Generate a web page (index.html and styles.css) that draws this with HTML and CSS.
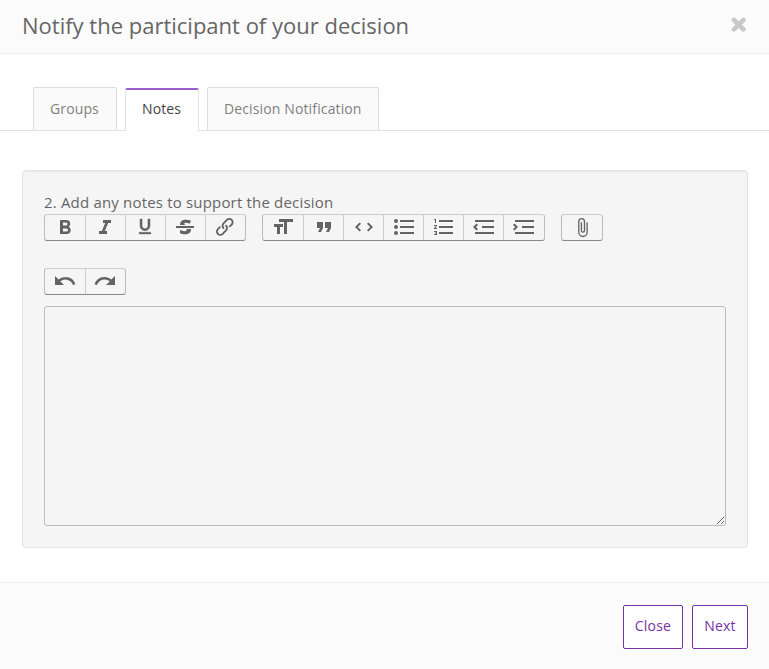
FILE: index.html
```
<!DOCTYPE html>
<html lang="en">
<head>
<meta charset="utf-8">
<title>Notify the participant of your decision</title>
<link rel="stylesheet" href="styles.css">
</head>
<body>
<header class="modal-header">
  <h1>Notify the participant of your decision</h1>
  <button class="dismiss" aria-label="Dismiss"><svg width="16" height="16" viewBox="0 0 16 16"><path d="M3 3l9.4 9.4M12.4 3L3 12.4" stroke="#c8c8c8" stroke-width="4.6" stroke-linecap="round"/></svg></button>
</header>
<main>
  <nav class="tabs">
    <a class="tab">Groups</a>
    <a class="tab active">Notes</a>
    <a class="tab">Decision Notification</a>
  </nav>
  <section class="well">
    <label>2. Add any notes to support the decision</label>
    <div class="toolbar">
      <div class="group">
        <button><svg viewBox="0 0 24 24"><path d="M15.6 11.8c1-.7 1.6-1.8 1.6-2.8a4 4 0 0 0-4-4H7v14h7c2.1 0 3.7-1.7 3.7-3.8 0-1.5-.8-2.8-2.1-3.4zM10 7.5h3a1.5 1.5 0 1 1 0 3h-3v-3zm3.5 9H10v-3h3.5a1.5 1.5 0 1 1 0 3z"/></svg></button>
        <button><svg viewBox="0 0 24 24"><path d="M10 5v3h2.2l-3.4 8H6v3h8v-3h-2.2l3.4-8H18V5h-8z"/></svg></button>
        <button><svg class="underline" viewBox="0 0 24 24"><path d="M12 17c3.31 0 6-2.69 6-6V3h-2.5v8c0 1.93-1.57 3.5-3.5 3.5S8.5 12.93 8.5 11V3H6v8c0 3.31 2.69 6 6 6zm-7 2v2h14v-2H5z"/></svg></button>
        <button><svg viewBox="0 0 24 24"><path d="M12.73 14l.28.14c.26.15.45.3.57.44.12.14.18.3.18.5 0 .3-.15.56-.44.75-.3.2-.76.3-1.39.3A13.52 13.52 0 0 1 7 14.95v3.37a10.64 10.64 0 0 0 4.84.88c1.26 0 2.35-.19 3.28-.56.93-.37 1.64-.9 2.14-1.57s.74-1.45.74-2.32c0-.26-.02-.51-.06-.75h-5.21zm-5.5-4c-.08-.34-.12-.7-.12-1.1 0-1.29.52-2.3 1.58-3.02 1.05-.72 2.5-1.08 4.34-1.08 1.62 0 3.28.34 4.97 1l-1.3 2.93c-1.47-.6-2.73-.9-3.8-.9-.55 0-.96.08-1.2.26-.26.17-.38.38-.38.64 0 .27.16.52.48.74.17.12.53.3 1.05.53H7.23zM3 13h18v-2H3v2z"/></svg></button>
        <button><svg viewBox="0 0 24 24"><path d="M9.88 13.7a4.3 4.3 0 0 1 0-6.07l3.37-3.37a4.26 4.26 0 0 1 6.07 0 4.3 4.3 0 0 1 0 6.06l-1.96 1.72a.91.91 0 1 1-1.3-1.3l1.97-1.71a2.46 2.46 0 0 0-3.48-3.48l-3.38 3.37a2.46 2.46 0 0 0 0 3.48.91.91 0 1 1-1.3 1.3z"/><path d="M4.25 19.46a4.3 4.3 0 0 1 0-6.07l1.93-1.9a.91.91 0 1 1 1.3 1.3l-1.93 1.9a2.46 2.46 0 0 0 3.48 3.48l3.37-3.38c.96-.96.96-2.52 0-3.48a.91.91 0 1 1 1.3-1.3 4.3 4.3 0 0 1 0 6.07l-3.38 3.38a4.26 4.26 0 0 1-6.07 0z"/></svg></button>
      </div>
      <div class="group blocks">
        <button><svg viewBox="0 0 24 24"><path d="M12 9v3H9v7H6v-7H3V9h9zM8 4h14v3h-6v12h-3V7H8V4z"/></svg></button>
        <button><svg viewBox="0 0 24 24"><path d="M6 17h3l2-4V7H5v6h3zm8 0h3l2-4V7h-6v6h3z"/></svg></button>
        <button><svg viewBox="0 0 24 24"><path d="M18.2 12L15 15.2l1.4 1.4L21 12l-4.6-4.6L15 8.8l3.2 3.2zM5.8 12L9 8.8 7.6 7.4 3 12l4.6 4.6L9 15.2 5.8 12z"/></svg></button>
        <button><svg viewBox="0 0 24 24"><path d="M4 4a2 2 0 1 0 0 4 2 2 0 0 0 0-4zm0 6a2 2 0 1 0 0 4 2 2 0 0 0 0-4zm0 6a2 2 0 1 0 0 4 2 2 0 0 0 0-4zm4 3h14v-2H8v2zm0-6h14v-2H8v2zm0-8v2h14V5H8z"/></svg></button>
        <button><svg viewBox="0 0 24 24"><path d="M2 17h2v.5H3v1h1v.5H2v1h3v-4H2v1zm1-9h1V4H2v1h1v3zm-1 3h1.8L2 13.1v.9h3v-1H3.2L5 10.9V10H2v1zm5-6v2h14V5H7zm0 14h14v-2H7v2zm0-6h14v-2H7v2z"/></svg></button>
        <button><svg viewBox="0 0 24 24"><path d="M3 19h19v-2H3v2zm7-6h12v-2H10v2zm-8.3-.3l2.8 2.9L6 14.2 4 12l2-2-1.4-1.5L1 12l.7.7zM3 5v2h19V5H3z"/></svg></button>
        <button><svg viewBox="0 0 24 24"><path d="M3 19h19v-2H3v2zm7-6h12v-2H10v2zm-6.9-1L1 14.2l1.4 1.4L6 12l-.7-.7-2.8-2.8L1 9.9 3.1 12zM3 5v2h19V5H3z"/></svg></button>
      </div>
      <div class="group">
        <button><svg class="clip" viewBox="0 0 24 24"><path d="M16.5 6v11.5a4 4 0 1 1-8 0V5a2.5 2.5 0 0 1 5 0v10.5a1 1 0 1 1-2 0V6H10v9.5a2.5 2.5 0 0 0 5 0V5a4 4 0 1 0-8 0v12.5a5.5 5.5 0 0 0 11 0V6h-1.5z"/></svg></button>
      </div>
      <div class="group">
        <button><svg viewBox="0 0 24 24"><path d="M12.5 8c-2.6 0-5 1-6.9 2.6L2 7v9h9l-3.6-3.6A8 8 0 0 1 20 16l2.4-.8a10.5 10.5 0 0 0-10-7.2z"/></svg></button>
        <button><svg viewBox="0 0 24 24"><path d="M18.4 10.6a10.5 10.5 0 0 0-16.9 4.6L4 16a8 8 0 0 1 12.7-3.6L13 16h9V7l-3.6 3.6z"/></svg></button>
      </div>
    </div>
    <textarea class="editor"></textarea>
  </section>
</main>
<footer class="modal-footer">
  <button class="action">Close</button>
  <button class="action">Next</button>
</footer>
</body>
</html>
```
FILE: styles.css
```
* { box-sizing: border-box; }
body {
  margin: 0;
  height: 669px;
  display: flex;
  flex-direction: column;
  overflow: hidden;
  background: #fff;
  font: 14px/20px "Open Sans", sans-serif;
  color: #666;
}
button { font: inherit; margin: 0; padding: 0; border: 0; background: none; }

.modal-header {
  display: flex;
  justify-content: space-between;
  height: 54px;
  padding: 10px 22px 0;
  background: #fbfbfb;
  border-bottom: 1px solid #eee;
}
.modal-header h1 { margin: 0; font-size: 22px; line-height: 30px; font-weight: 400; color: #666; }
.dismiss { width: 16px; height: 16px; margin: 7px 0 0; }
.dismiss svg { display: block; }

main { flex: 1; padding-top: 33px; }
.tabs {
  display: flex;
  gap: 8px;
  height: 44px;
  padding-left: 33px;
  border-bottom: 1px solid #e1e1e8;
  letter-spacing: .13px;
}
.tab {
  height: 43px;
  width: 84px;
  padding: 11px 0 0 16px;
  border: 1px solid #ddd;
  border-bottom: 0;
  border-radius: 2px 2px 0 0;
  background: #fafafa;
  color: #808080;
}
.tab:last-child { width: 172px; }
.tab.active {
  height: 43px;
  width: 74px;
  margin-top: 1px;
  padding-top: 9px;
  border-color: #e1e1e8;
  border-top: 2px solid #9b5fcb;
  background: #fff;
  color: #444;
}

.well {
  height: 378px;
  margin: 39px 21px 0 22px;
  padding: 21px 21px 0;
  border: 1px solid #e3e3e3;
  border-radius: 4px;
  background: #f5f5f5;
  box-shadow: inset 0 1px 1px rgba(0, 0, 0, .05);
}
.well label {
  display: block;
  height: 22px;
  font-size: 15px;
  line-height: 20px;
  letter-spacing: .18px;
}
.toolbar { display: flex; flex-wrap: wrap; gap: 27px 16px; max-width: 600px; }
.group {
  display: flex;
  height: 27px;
  border: 1px solid #bbb;
  border-color: #ccc #bbb #888;
  border-radius: 3px;
}
.group button {
  display: flex;
  align-items: flex-start;
  width: 40px;
  height: 25px;
  padding-left: 8px;
}
.group button + button { padding-left: 7px; border-left: 1px solid #ccc; }
.blocks button + button { padding-left: 8px; }
.blocks button:last-child { width: 41px; }
.group svg { flex: none; width: 24px; height: 24px; fill: #636363; }
.group .underline {
  width: 20px;
  height: 21px;
  margin: 1px 0 0 2px;
  stroke: #636363;
  stroke-width: .5;
}
.group .clip { width: 21px; height: 21px; margin: 2px 0 0 2px; }

.editor {
  display: block;
  width: 682px;
  height: 220px;
  margin-top: 11px;
  border: 1px solid #bbb;
  border-radius: 3px;
  background: transparent;
  resize: both;
}

.modal-footer {
  display: flex;
  justify-content: flex-end;
  gap: 9px;
  height: 87px;
  padding: 22px 21px 0 0;
  background: #fbfbfb;
  border-top: 1px solid #eee;
}
.action {
  width: 56px;
  height: 44px;
  padding: 0 0 2px;
  border: 1px solid #7632a5;
  border-radius: 2px;
  background: #fff;
  color: #7632a5;
  letter-spacing: .2px;
}
.action:first-child { width: 60px; }
```
